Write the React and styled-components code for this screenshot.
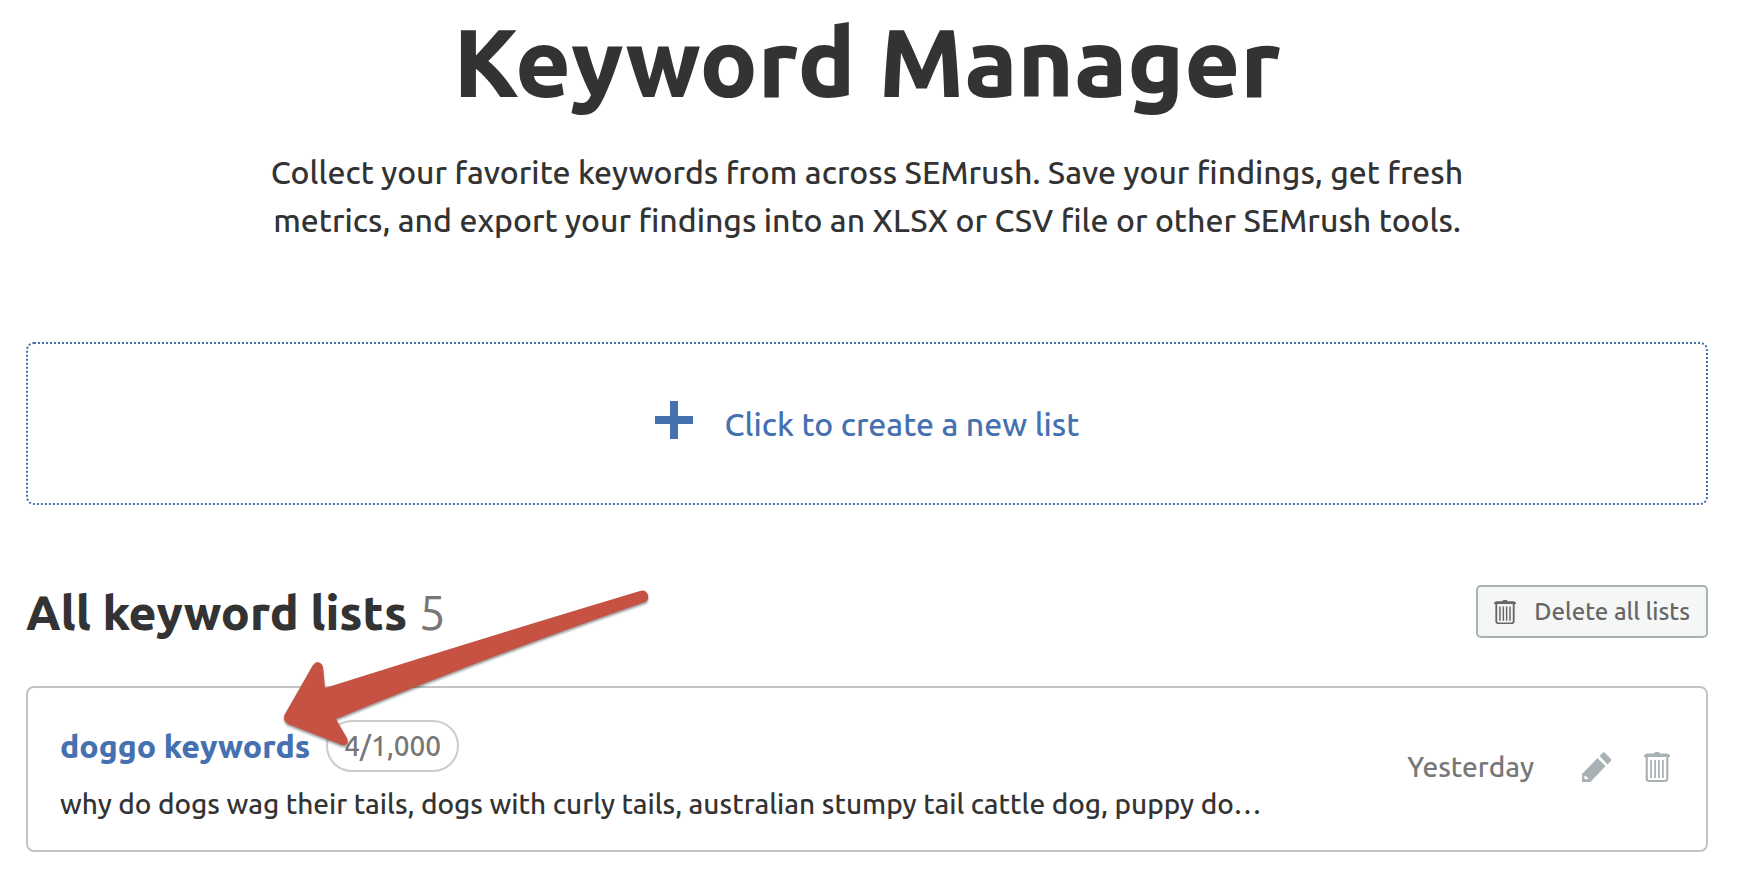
import React from 'react'
import styled, { createGlobalStyle } from 'styled-components'

const GlobalStyle = createGlobalStyle`
body{
    margin:0;
    background-color:#fff;
    color:#333;
    font-family:Ubuntu, "Noto Sans", sans-serif;
    font-weight:500;
}
*{
    box-sizing:border-box;
}
button{
    font-family:inherit;
    font-weight:inherit;
    cursor:pointer;
}
`
const Page = styled.main`
padding:0 52px 26px 26px;
`
const Header = styled.header`
text-align:center;
`
const Title = styled.h1`
margin:0;
padding-top:6px;
font-size:96px;
line-height:112px;
font-weight:800;
`
const Intro = styled.p`
margin:0 auto;
padding-top:30px;
max-width:1240px;
font-size:32px;
line-height:48px;
`
const CreateButton = styled.button`
display:flex;
align-items:center;
justify-content:center;
gap:32px;
width:100%;
height:163px;
margin-top:98px;
padding:0;
border:2px dotted #4571b0;
border-radius:8px;
background-color:transparent;
color:#4571b0;
font-size:32px;
line-height:40px;
`
const Lists = styled.section`
position:relative;
margin-top:80px;
`
const ListsHeader = styled.div`
display:flex;
align-items:center;
justify-content:space-between;
`
const ListsTitle = styled.h2`
margin:0;
font-size:48px;
line-height:52px;
font-weight:800;
`
const Count = styled.span`
color:#777;
font-weight:400;
`
const DeleteButton = styled.button`
display:flex;
align-items:center;
gap:18px;
height:53px;
padding:0 16px;
border:2px solid #a8b1b3;
border-radius:5px;
background-color:#f5f7f7;
color:#666;
font-size:24px;
line-height:32px;
`
const Card = styled.article`
display:flex;
align-items:center;
justify-content:space-between;
margin-top:48px;
padding:0 36px 0 32px;
border:2px solid #bfc5c7;
border-radius:8px;
`
const Info = styled.div`
min-width:0;
padding:32px 0 26px;
`
const NameRow = styled.div`
display:flex;
align-items:center;
gap:16px;
`
const ListLink = styled.a`
color:#4571b0;
font-size:32px;
line-height:40px;
font-weight:800;
text-decoration:none;
`
const Badge = styled.span`
padding:0 16px;
border:2px solid #ccc;
border-radius:26px;
color:#777;
font-size:28px;
line-height:48px;
`
const Keywords = styled.p`
margin:12px 0 0;
font-size:28px;
line-height:40px;
white-space:nowrap;
overflow:hidden;
text-overflow:ellipsis;
`
const Actions = styled.div`
display:flex;
align-items:center;
flex-shrink:0;
padding-bottom:4px;
`
const Time = styled.time`
margin-right:48px;
color:#777;
font-size:28px;
line-height:40px;
`
const IconButton = styled.button`
display:flex;
padding:0;
border:0;
background-color:transparent;
color:#a8b1b3;
& + &{
    margin-left:32px;
}
`
const Pointer = styled.svg`
position:absolute;
top:0;
left:256px;
pointer-events:none;
filter:drop-shadow(0 2px 1px rgba(0, 0, 0, .4));
`

const PlusIcon = () => (
    <svg width="38" height="46" viewBox="0 0 38 46" fill="currentColor" aria-hidden="true">
        <path d="M15 0h8v15h15v8H23v15h-8V23H0v-8h15z" />
    </svg>
)

const TrashIcon = ({ width, height }) => (
    <svg width={width} height={height} viewBox="0 0 24 30" preserveAspectRatio="none" aria-hidden="true">
        <path d="M0 5V3.500Q1 1.500 3 1.500H9Q9.500 0 11 0h2q1.500 0 2 1.500h6q2 0 3 2V5z" fill="currentColor" />
        <path d="M2.500 5v21.500q0 2.500 2.500 2.500h14q2.500 0 2.500-2.500V5" fill="none" stroke="currentColor" strokeWidth="2" />
        <path d="M6.500 8v18M10.200 8v18M13.800 8v18M17.500 8v18" fill="none" stroke="currentColor" strokeWidth="1.600" />
    </svg>
)

const PencilIcon = () => (
    <svg width="30" height="30" viewBox="0 0 30 30" fill="currentColor" aria-hidden="true">
        <path d="M20.500.8q1.200-1 2.400 0l5.800 6q1 1.200 0 2.400L25.500 12.500 17.500 4z" />
        <path fillRule="evenodd" d="M15.500 6l8 8L8.500 30H0v-8zM3 23.500Q1.800 25 2.800 27.200h3.700Q5.500 24.500 3 23.500z" />
    </svg>
)

const lists = [
    {
        name: 'doggo keywords',
        count: '4/1,000',
        keywords: 'why do dogs wag their tails, dogs with curly tails, australian stumpy tail cattle dog, puppy do…',
        time: 'Yesterday',
    },
]

const ListCard = ({ name, count, keywords, time }) => (
    <Card>
        <Info>
            <NameRow>
                <ListLink href="#">{name}</ListLink>
                <Badge>{count}</Badge>
            </NameRow>
            <Keywords>{keywords}</Keywords>
        </Info>
        <Actions>
            <Time>{time}</Time>
            <IconButton aria-label="Edit list"><PencilIcon /></IconButton>
            <IconButton aria-label="Delete list"><TrashIcon width={26} height={30} /></IconButton>
        </Actions>
    </Card>
)

const App = () => (
    <>
        <GlobalStyle />
        <Page>
            <Header>
                <Title>Keyword Manager</Title>
                <Intro>
                    Collect your favorite keywords from across SEMrush. Save your findings, get fresh
                    metrics, and export your findings into an XLSX or CSV file or other SEMrush tools.
                </Intro>
            </Header>
            <CreateButton>
                <PlusIcon />
                Click to create a new list
            </CreateButton>
            <Lists>
                <ListsHeader>
                    <ListsTitle>All keyword lists <Count>5</Count></ListsTitle>
                    <DeleteButton>
                        <TrashIcon width={22} height={24} />
                        Delete all lists
                    </DeleteButton>
                </ListsHeader>
                {lists.map(list => <ListCard key={list.name} {...list} />)}
                <Pointer width="370" height="168" viewBox="282 586 370 168" aria-hidden="true">
                    <path
                        fill="#c55243"
                        d="M285 715L313 666Q315 663 318 663Q322 664 323 668L325 689Q480 640 640 592Q646 590 648 596Q649 601 645 603Q480 660 336 720L347 739Q350 747 342 746L288 725Q282 721 285 715Z"
                    />
                </Pointer>
            </Lists>
        </Page>
    </>
)
export default App
